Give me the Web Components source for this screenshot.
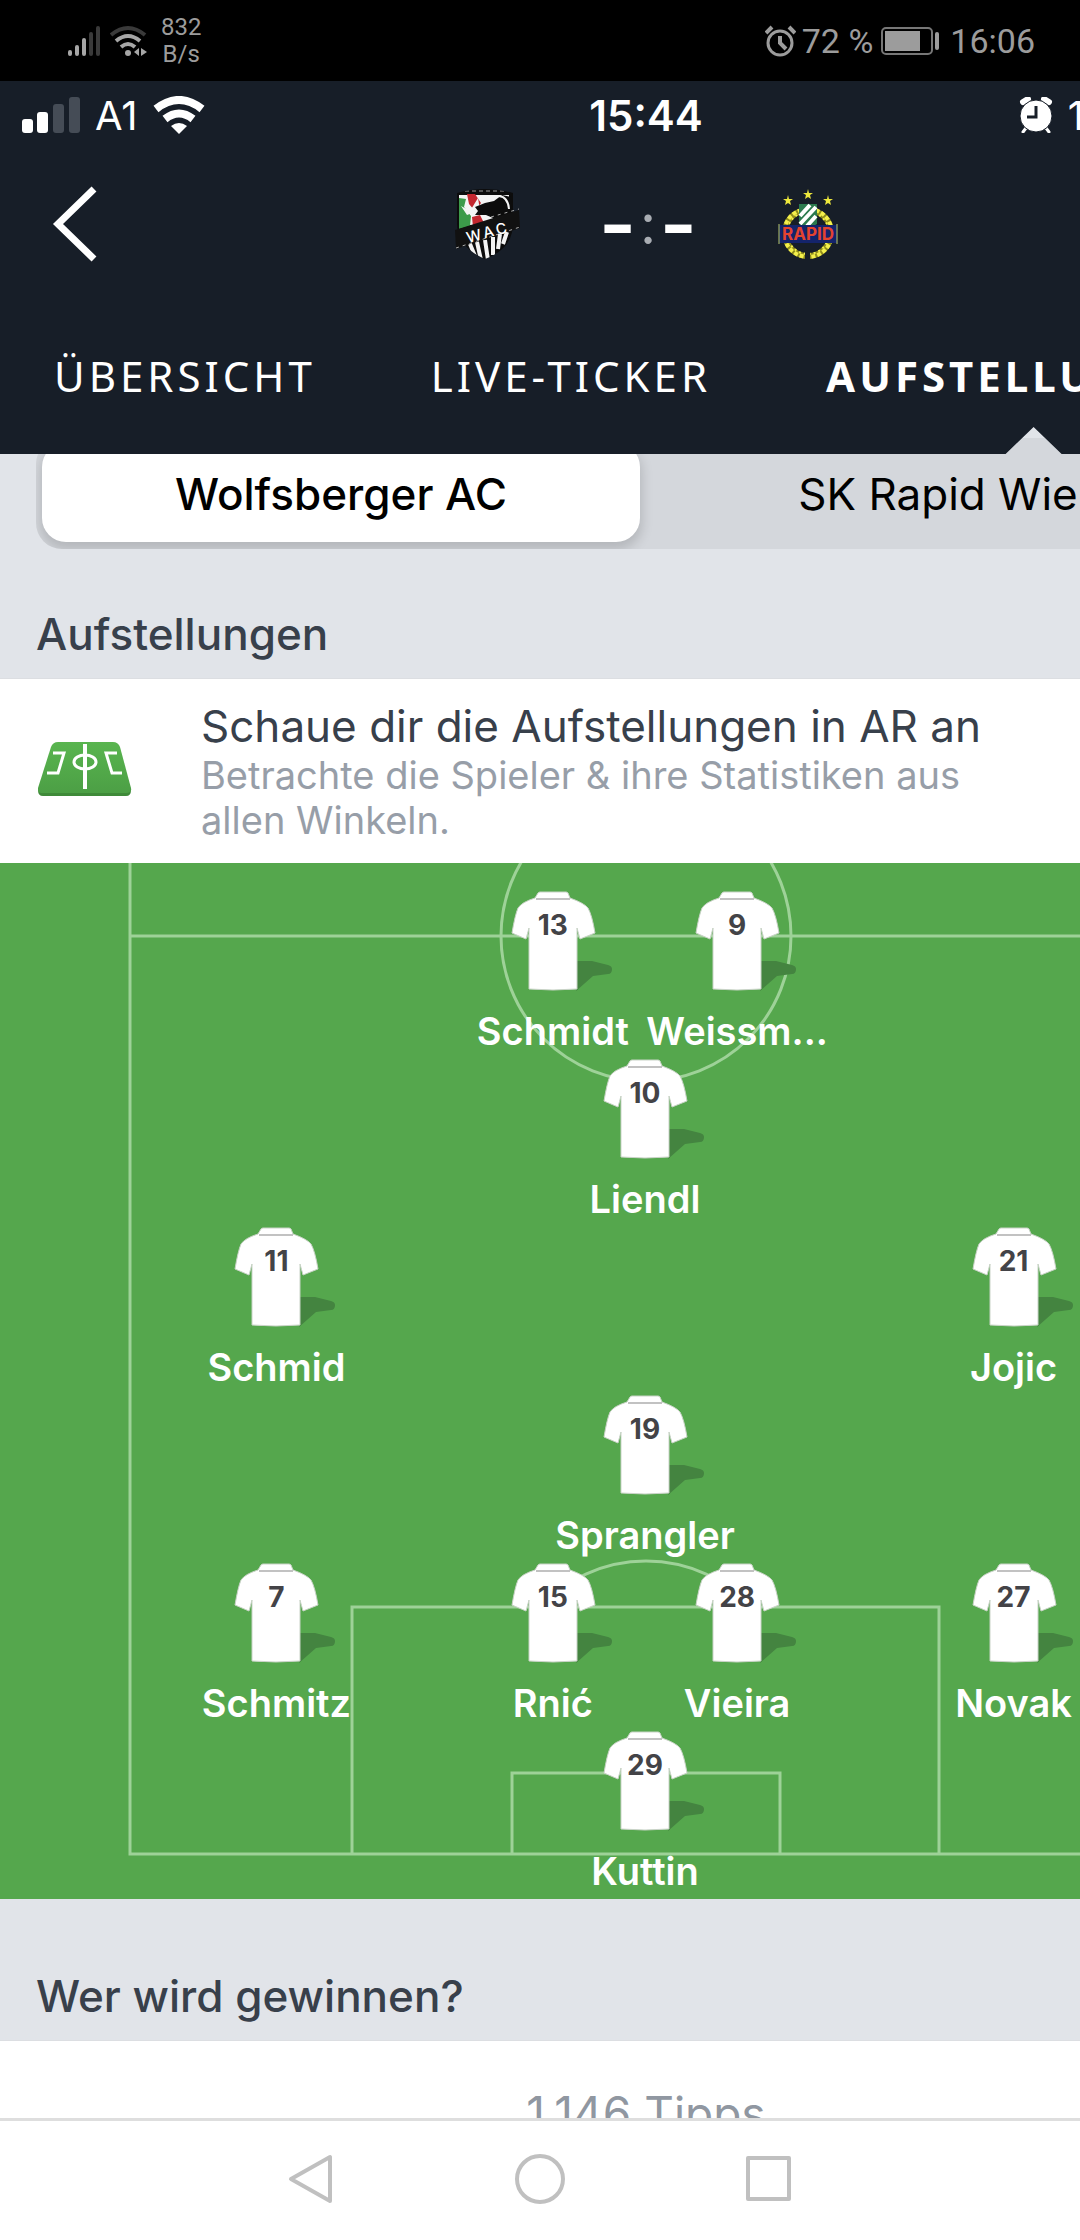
<!DOCTYPE html>
<html lang="de">
<head>
<meta charset="utf-8">
<meta name="viewport" content="width=device-width, initial-scale=1">
<title>Wolfsberger AC – SK Rapid Wien</title>
<style>
  body {
    margin: 0;
    height: 100vh;
    overflow: hidden;
    display: flex;
    flex-direction: column;
    background: #fff;
    font-family: Inter, "Liberation Sans", sans-serif;
  }
</style>
</head>
<body>
  <status-bar></status-bar>
  <app-screen>
    <match-header slot="header"></match-header>
    <team-switch></team-switch>
    <section-title>Aufstellungen</section-title>
    <ar-teaser>
      Schaue dir die Aufstellungen in AR an
      <span slot="text">Betrachte die Spieler &amp; ihre Statistiken aus allen Winkeln.</span>
    </ar-teaser>
    <football-pitch></football-pitch>
    <section-title>Wer wird gewinnen?</section-title>
    <tip-card>1.146 Tipps</tip-card>
  </app-screen>
  <system-nav></system-nav>

<script>
//* small helper: opens the shadow root of an element and fills it
function render(element, html) {
  element.attachShadow({ mode: 'open' }).innerHTML = html;
}

//* status bar of the phone itself
class StatusBar extends HTMLElement {
  constructor() {
    super();
    render(this, `
      <style>
        :host {
          flex: none;
          display: flex;
          justify-content: space-between;
          align-items: center;
          height: 81px;
          padding: 0 45px 0 67px;
          box-sizing: border-box;
          background: #000;
          color: #9c9c9c;
          font-family: Roboto, sans-serif;
          font-size: 34px;
        }
        div { display: flex; align-items: center; }
        svg { display: block; }
        .wifi { margin-left: 8px; }
        .speed {
          margin-left: 14px;
          font-size: 24px;
          line-height: 27px;
          text-align: center;
        }
        .battery { margin: 0 10px 0 8px; }
        .percent { margin-left: 6px; }
      </style>
      <div>
        <svg width="35" height="32" viewBox="0 0 35 32" stroke-width="4" stroke-linecap="round" stroke="#a6a6a6">
          <path d="M3 27v2M10 22v7M17 15v14"/>
          <path d="M24 9v20M31 3v26" stroke="#3a3a3a"/>
        </svg>
        <svg class="wifi" width="37" height="32" viewBox="0 0 37 32" fill="none" stroke="#a6a6a6" stroke-width="4">
          <path d="M1 10q17-14 34 0" stroke="#3a3a3a"/>
          <path d="M6 16q12-10 24 0M11 22q7-6 14 0"/>
          <circle cx="18" cy="28" r="3" fill="#a6a6a6" stroke="none"/>
          <path d="M29 23v8l-5-4zM31 23v8l6-4z" fill="#a6a6a6" stroke="none"/>
        </svg>
        <div class="speed">832<br>B/s</div>
      </div>
      <div>
        <svg width="31" height="32" viewBox="0 0 31 32" fill="none" stroke="#9c9c9c" stroke-width="3">
          <circle cx="15" cy="18" r="12"/>
          <path d="M1 8l6-6M30 8l-6-6M15 11v7l6 6" stroke-width="4"/>
        </svg>
        <span class="percent">72 %</span>
        <svg class="battery" width="59" height="28" viewBox="0 0 59 28">
          <rect x="1" y="1" width="50" height="26" rx="4" fill="none" stroke="#777" stroke-width="2"/>
          <rect x="4" y="4" width="35" height="20" fill="#9c9c9c"/>
          <rect x="54" y="5" width="4" height="18" rx="2" fill="#9c9c9c"/>
        </svg>
        <span>16:06</span>
      </div>
    `);
  }
}
customElements.define('status-bar', StatusBar);

//* The screen is wider than the window, so its right side is cut off
class AppScreen extends HTMLElement {
  constructor() {
    super();
    render(this, `
      <style>
        :host {
          display: block;
          flex: 1;
          min-height: 0;
          overflow: hidden;
        }
        .screen {
          width: calc(120% - 4px);
          background: #e1e4e9;
        }
        ::slotted(match-header) {
          position: relative;
          z-index: 1;
        }
        /* the content is scrolled a bit below the header */
        main {
          margin-top: -27px;
          padding-top: 11px;
        }
      </style>
      <div class="screen">
        <slot name="header"></slot>
        <main><slot></slot></main>
      </div>
    `);
  }
}
customElements.define('app-screen', AppScreen);

class MatchHeader extends HTMLElement {
  constructor() {
    super();
    render(this, `
      <style>
        :host {
          display: block;
          background: #171e28;
          color: #fff;
          /* notch below the active tab */
          clip-path: polygon(0 0, 100% 0, 100% 100%, calc(80% + 28px) 100%, 80% calc(100% - 27px), calc(80% - 28px) 100%, 0 100%);
        }
        svg { display: block; }
        .status {
          display: grid;
          grid-template-columns: 1fr auto 1fr;
          align-items: center;
          height: 60px;
          padding: 8px 22px 0;
          box-sizing: border-box;
          font-size: 40px;
        }
        .status div { display: flex; align-items: center; gap: 15px; }
        .status time { font-size: 42px; font-weight: 600; }
        .status .end { justify-content: flex-end; margin-right: 186px; }
        .match {
          display: grid;
          grid-template-columns: 1fr auto 1fr;
          align-items: center;
          height: 166px;
          padding-left: 4px;
        }
        button {
          justify-self: start;
          margin-left: 48px;
          padding: 0;
          border: 0;
          background: none;
        }
        .teams { display: flex; align-items: center; gap: 76px; }
        .score {
          display: flex;
          align-items: center;
          justify-content: space-between;
          width: 98px;
          font-size: 80px;
          font-weight: 600;
          line-height: 80px;
        }
        .score i {
          color: #a9adb3;
          font-style: normal;
          font-weight: 400;
          font-size: 56px;
        }
        nav {
          display: flex;
          gap: 115px;
          padding: 41px 0 50px 54px;
          font: 42px/56px "Noto Sans", sans-serif;
          letter-spacing: 4px;
        }
        a { color: inherit; text-decoration: none; }
        a[aria-current] { font-weight: 700; }
      </style>
      <div class="status">
        <div>
          <svg width="58" height="36" viewBox="0 0 58 36" fill="#fff">
            <rect y="22" width="11" height="14" rx="3"/>
            <rect x="15" y="15" width="11" height="21" rx="3"/>
            <rect x="31" y="7" width="11" height="29" rx="3" fill="#454c56"/>
            <rect x="47" width="11" height="36" rx="3" fill="#454c56"/>
          </svg>
          <span>A1</span>
          <svg width="52" height="38" viewBox="0 0 52 38" fill="none" stroke="#fff" stroke-width="8">
            <path d="M3 13q23-18 46 0"/>
            <path d="M12 23q14-11 28 0"/>
            <path d="M26 38l-8-8q8-6 16 0z" fill="#fff" stroke="none"/>
          </svg>
        </div>
        <time>15:44</time>
        <div class="end">
          <svg width="34" height="36" viewBox="0 0 34 36">
            <g stroke="#fff" stroke-width="6" stroke-linecap="round">
              <path d="M4 5l5-3M30 5l-5-3"/>
              <path d="M7 31l-3 4M27 31l3 4" stroke-width="3"/>
            </g>
            <circle cx="17" cy="19" r="16" fill="#fff" stroke="#171e28" stroke-width="1"/>
            <path d="M17 9v11H8" fill="none" stroke="#171e28" stroke-width="3"/>
          </svg>
          <span>1</span>
        </div>
      </div>
      <div class="match">
        <button aria-label="Zurück">
          <svg width="46" height="76" viewBox="0 0 46 76" fill="none" stroke="#fff" stroke-width="7">
            <path d="M42 3L6 38l36 35"/>
          </svg>
        </button>
        <div class="teams">
          <svg width="70" height="74" viewBox="0 0 70 74">
            <defs>
              <clipPath id="shield"><path d="M4 6q28-8 56 0v30q0 26-28 36Q4 60 4 36z"/></clipPath>
            </defs>
            <g clip-path="url(#shield)">
              <path fill="#0c0c0c" d="M0 0h70v74H0z"/>
              <path fill="#f4f4f4" d="M6 8h50v30H6z"/>
              <path fill="#3c9a4a" d="M6 11l7 1-2 8 7 9-1 10-11 3z"/>
              <path fill="#c3272f" d="M14 7h8l6 9-6 8-6-7zM19 30l8-2 5 10-12 2z"/>
              <path fill="#f4f4f4" d="M8 19l9 5 8-13 2 12 12 2 7 5-12-2-12-3-8 3z"/>
              <path fill="#0c0c0c" d="M22 20l10-4 9-2 8-6 9 2v22l-12 6-6-7-7-3-11 0 3-4z"/>
              <path stroke="#f4f4f4" stroke-width="2" fill="none" d="M46 9q9 1 10 13"/>
              <path stroke="#999" stroke-width="1" fill="none" d="M12 4h42" stroke-dasharray="4 3"/>
            </g>
            <path fill="#111" d="M2 43l64-20 1 18L3 62z"/>
            <path d="M3 61l64-21M38 30l28-8" stroke="#aaa" stroke-width="1" stroke-dasharray="3 4"/>
            <g clip-path="url(#shield)" stroke="#f4f4f4" stroke-width="4">
              <path d="M17 57l5 12M24 55l4 18M32 53l3 20M40 50l0 18M47 47l-2 15M54 45l-4 12"/>
            </g>
            <text x="15" y="56" transform="rotate(-15 15 56)" fill="#fff" font-family="Inter, sans-serif" font-size="15" font-weight="500" letter-spacing="3">WAC</text>
          </svg>
          <div class="score"><span>-</span><i>:</i><span>-</span></div>
          <svg width="70" height="74" viewBox="0 0 70 74">
            <g fill="#eee83c">
              <path d="M35 2l1 4h4l-3 2 1 4-3-2-3 2 1-4-3-2h4z"/>
              <path d="M15 8l1 4h4l-3 2 1 4-3-2-3 2 1-4-3-2h4z"/>
              <path d="M55 8l1 4h4l-3 2 1 4-3-2-3 2 1-4-3-2h4z"/>
            </g>
            <circle cx="35" cy="46" r="23" fill="none" stroke="#8f8c1c" stroke-width="6"/>
            <circle cx="35" cy="46" r="24" fill="none" stroke="#f4f04c" stroke-width="4" stroke-dasharray="4 2"/>
            <circle cx="35" cy="46" r="21" fill="none" stroke="#f4f04c" stroke-width="2" stroke-dasharray="2 3"/>
            <path fill="#171e28" d="M32 65h5v8h-5z"/>
            <path fill="#2c7a4e" d="M26 17h18v20l-9 5-9-5z"/>
            <path stroke="#fff" stroke-width="4" d="M27 29l10-11M27 37l16-17M34 39l9-10"/>
            <path fill="#14246b" d="M6 38h58v18H6z"/>
            <path stroke="#b9c96a" stroke-width="1" d="M6 37v20M64 37v20"/>
            <text x="35" y="53" text-anchor="middle" fill="#e5432f" font-family="Inter, sans-serif" font-size="17" font-weight="700">RAPID</text>
          </svg>
        </div>
      </div>
      <nav>
        <a href="#uebersicht">ÜBERSICHT</a>
        <a href="#ticker">LIVE-TICKER</a>
        <a href="#aufstellung" aria-current="page">AUFSTELLUNGEN</a>
      </nav>
    `);
  }
}
customElements.define('match-header', MatchHeader);

class TeamSwitch extends HTMLElement {
  constructor() {
    super();
    render(this, `
      <style>
        :host {
          display: grid;
          grid-template-columns: 1fr 1fr;
          gap: 12px;
          margin: 0 36px;
          padding: 5px 6px 7px;
          border-radius: 26px;
          background: #d4d7dc;
          overflow: hidden;
        }
        button {
          height: 99px;
          padding: 2px 0 0;
          border: 0;
          border-radius: 24px;
          background: none;
          color: #000;
          font: 44px/52px Inter, sans-serif;
        }
        button[aria-pressed="true"] {
          background: #fff;
          box-shadow: 0 6px 12px 2px rgba(0, 0, 0, .15);
          font-weight: 500;
        }
      </style>
      <button aria-pressed="true">Wolfsberger AC</button>
      <button aria-pressed="false">SK Rapid Wien</button>
    `);
  }
}
customElements.define('team-switch', TeamSwitch);

class SectionTitle extends HTMLElement {
  constructor() {
    super();
    render(this, `
      <style>
        :host {
          display: block;
          padding: 59px 36px 18px;
          border-bottom: 1px solid #dcdee2;
        }
        h2 {
          margin: 0;
          color: #38404b;
          font-size: 44px;
          font-weight: 500;
          line-height: 52px;
        }
      </style>
      <h2><slot></slot></h2>
    `);
  }
}
customElements.define('section-title', SectionTitle);

class ArTeaser extends HTMLElement {
  constructor() {
    super();
    render(this, `
      <style>
        :host { display: block; background: #fff; }
        a {
          display: flex;
          align-items: center;
          gap: 69px;
          padding: 20px 36px 20px 38px;
          color: #38404b;
          text-decoration: none;
        }
        svg { flex: none; }
        h3 {
          margin: 0;
          font-size: 44px;
          font-weight: 400;
          line-height: 54px;
        }
        p {
          margin: 0;
          max-width: 800px;
          color: #979ea8;
          font-size: 38px;
          line-height: 45px;
        }
      </style>
      <a href="#ar">
        <svg width="94" height="58" viewBox="0 0 94 58">
          <defs>
            <linearGradient id="grass" x2="0" y2="1">
              <stop stop-color="#59b54f"/>
              <stop offset="1" stop-color="#4c9f45"/>
            </linearGradient>
          </defs>
          <path fill="#3f8a39" d="M0 48q0 6 5 6h83q5 0 5-6z"/>
          <path fill="url(#grass)" d="M20 0h55q5 0 7 5l11 41q1 5-5 5H5q-6 0-5-5L13 5q2-5 7-5z"/>
          <g fill="none" stroke="#fff" stroke-width="3">
            <path d="M47 2v45" stroke-width="4"/>
            <ellipse cx="47" cy="20" rx="11" ry="7"/>
            <path d="M15 11h11l-6 20H9M79 11H68l6 20h10"/>
          </g>
        </svg>
        <div>
          <h3><slot></slot></h3>
          <p><slot name="text"></slot></p>
        </div>
      </a>
    `);
  }
}
customElements.define('ar-teaser', ArTeaser);

//* one player: shirt with the number on it and the name below
class PitchPlayer extends HTMLElement {
  constructor() {
    super();
    this.root = this.attachShadow({ mode: 'open' });
  }
  set player(player) {
    this.root.innerHTML = `
      <style>
        :host {
          display: flex;
          flex-direction: column;
          align-items: center;
          gap: 18px;
        }
        .kit { display: grid; justify-items: center; }
        .kit > * { grid-area: 1 / 1; }
        svg { display: block; overflow: visible; }
        b {
          padding-top: 14px;
          color: #434347;
          font-size: 28px;
          font-weight: 700;
          line-height: 40px;
        }
        span {
          color: #fff;
          font-size: 38px;
          font-weight: 600;
          line-height: 44px;
          white-space: nowrap;
        }
      </style>
      <div class="kit">
        <svg width="84" height="100" viewBox="0 0 84 100">
          <path fill="#448440" d="M66 70h15l16 4q4 1 4 4 0 5-4 5l-15 2-17 15z"/>
          <path fill="#fff" stroke="#c9d3c7" d="M27 2q1-1 2-1h26q1 0 2 1l2 5q14 5 18 10 4 7 7 25l-15 6-3-11v61q-24 2-48 0V37l-3 11L1 42Q4 24 7 17q4-6 17-10z"/>
          <path fill="none" stroke="#c2c2c2" stroke-width="2" d="M25 8h34"/>
        </svg>
        <b>${player.number}</b>
      </div>
      <span>${player.name}</span>
    `;
  }
}
customElements.define('pitch-player', PitchPlayer);

//* line and column place a player on the 6 x 14 grid of the pitch
const players = [
  { number: 13, name: 'Schmidt', line: 1, column: 6 },
  { number: 9, name: 'Weissm...', line: 1, column: 8 },
  { number: 10, name: 'Liendl', line: 2, column: 7 },
  { number: 11, name: 'Schmid', line: 3, column: 3 },
  { number: 21, name: 'Jojic', line: 3, column: 11 },
  { number: 19, name: 'Sprangler', line: 4, column: 7 },
  { number: 7, name: 'Schmitz', line: 5, column: 3 },
  { number: 15, name: 'Rnić', line: 5, column: 6 },
  { number: 28, name: 'Vieira', line: 5, column: 8 },
  { number: 27, name: 'Novak', line: 5, column: 11 },
  { number: 29, name: 'Kuttin', line: 6, column: 7 },
];

class FootballPitch extends HTMLElement {
  constructor() {
    super();
    render(this, `
      <style>
        :host {
          display: block;
          position: relative;
          margin-bottom: 12px;
          background: #55a74d;
        }
        svg {
          position: absolute;
          inset: 0;
          width: 100%;
          height: 100%;
        }
        .lineup {
          position: relative;
          display: grid;
          grid-template-columns: repeat(14, minmax(0, 1fr));
          grid-template-rows: repeat(6, 168px);
          padding: 28px 2px 0 0;
        }
      </style>
      <svg viewBox="0 0 1292 1036" preserveAspectRatio="none" fill="none" stroke="#9ed298" stroke-width="3">
        <path d="M130 0v991h1032V0M130 73h1032"/>
        <circle cx="646" cy="73" r="145"/>
        <path d="M352 991V744h587v247M512 991V910h268v81"/>
        <path d="M540 744a145 145 0 0 1 212 0"/>
      </svg>
      <div class="lineup"></div>
    `);
    const lineup = this.shadowRoot.querySelector('.lineup');
    players.forEach((player) => {
      const element = document.createElement('pitch-player');
      element.player = player;
      element.style.gridRow = player.line;
      element.style.gridColumn = `${player.column} / span 2`;
      lineup.append(element);
    });
  }
}
customElements.define('football-pitch', FootballPitch);

class TipCard extends HTMLElement {
  constructor() {
    super();
    render(this, `
      <style>
        :host {
          display: block;
          padding: 46px 36px;
          background: #fff;
          color: #9097a1;
          font-size: 46px;
          line-height: 52px;
          text-align: center;
        }
      </style>
      <slot></slot>
    `);
  }
}
customElements.define('tip-card', TipCard);

//* back, home and recent apps
class SystemNav extends HTMLElement {
  constructor() {
    super();
    render(this, `
      <style>
        :host {
          flex: none;
          display: flex;
          justify-content: center;
          align-items: center;
          gap: 177px;
          height: 122px;
          padding-bottom: 4px;
          box-sizing: border-box;
          border-top: 3px solid #dedede;
          background: #fff;
        }
        button { padding: 0; border: 0; background: none; }
        svg { display: block; fill: none; stroke: #c0c0c0; stroke-width: 4; stroke-linejoin: round; }
      </style>
      <button aria-label="Zurück"><svg width="52" height="52" viewBox="0 0 52 52"><path d="M45 4v44L6 26z"/></svg></button>
      <button aria-label="Startbildschirm"><svg width="52" height="52" viewBox="0 0 52 52"><circle cx="26" cy="26" r="23"/></svg></button>
      <button aria-label="Letzte Apps"><svg width="52" height="52" viewBox="0 0 52 52"><path d="M5 5h41v41H5z"/></svg></button>
    `);
  }
}
customElements.define('system-nav', SystemNav);
</script>
</body>
</html>
